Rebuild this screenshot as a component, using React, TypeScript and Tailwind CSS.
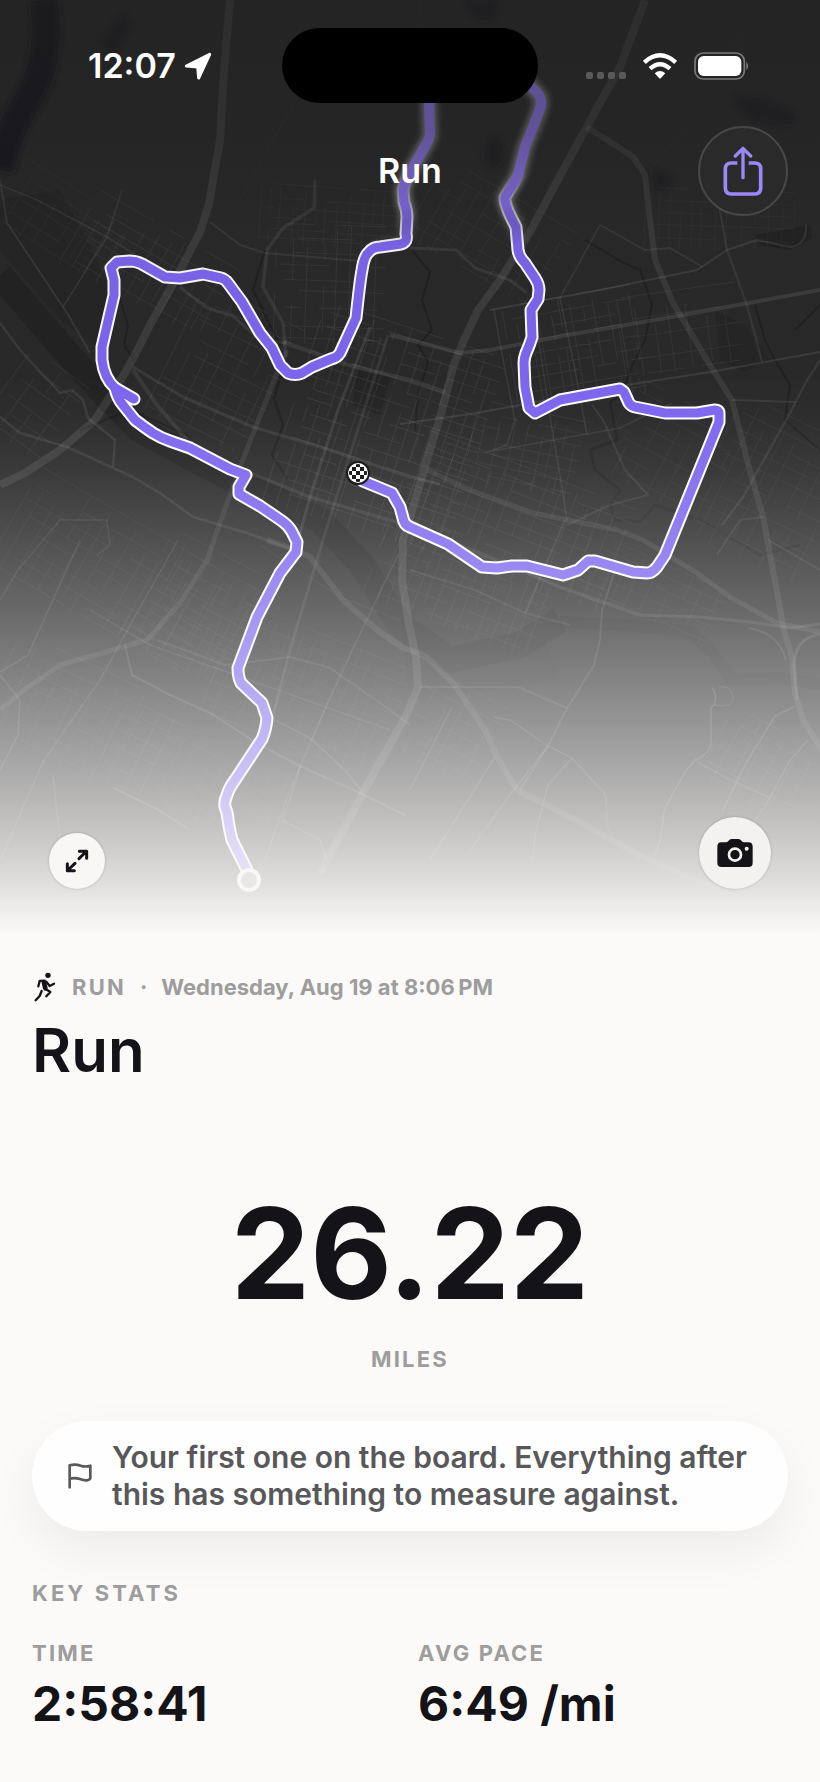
import React from "react";

type Road = { d: string; w: number; o: number };

const majorRoads: Road[] = [
  { d: "M230 0L224 70L220 140L213 180L209 204L200 232L175 280L150 325L135 355L125 373L95 420L60 450L25 473L0 485", w: 8, o: 0.09 },
  { d: "M645 0L620 67L585 130L555 185L530 232L500 280L478 310L464 340L453 367L443 407L427 460L413 507L403 540L402 580L409 625L416 657L418 687L408 712L363 793L320 873", w: 8, o: 0.09 },
  { d: "M267 540L290 548L310 557L343 600L377 630L403 648Q420 652 430 660L453 683L485 730L497 757L517 790L570 817L643 857L720 890", w: 6, o: 0.08 },
  { d: "M586 127L612 143L633 157L645 175L650 220L655 260L673 303L713 370L732 400L747 460L763 517L778 597L783 627L792 657L795 693L803 720L822 750", w: 6, o: 0.08 },
  { d: "M820 290L683 315L568 335L490 350L460 353L410 340L390 335", w: 4, o: 0.09 },
  { d: "M283 342L320 355L345 364L410 380L445 392", w: 4, o: 0.08 },
  { d: "M820 352L710 372L627 385L477 413L400 424", w: 2, o: 0.09 },
  { d: "M490 310L600 290L697 270L727 250L757 240L790 247Q807 245 806 225", w: 2, o: 0.09 },
  { d: "M427 470L470 490L533 513L617 530L643 540L697 573L730 597L777 623L820 632", w: 5, o: 0.07 },
  { d: "M820 360L806 382L790 413L743 497L722 525", w: 2.5, o: 0.07 },
  { d: "M0 710L24 690L60 665L147 640L180 603L207 560L220 523L240 467L277 373L287 350", w: 5, o: 0.07 },
  { d: "M315 180L314 208L283 228L267 250L263 287L283 323L286 357", w: 3.5, o: 0.07 },
  { d: "M180 287L207 308L233 316L260 340L287 343", w: 3, o: 0.08 },
  { d: "M0 323L20 350L60 393L72 390L83 400L88 418L115 440L113 467", w: 2.5, o: 0.08 },
  { d: "M0 417L20 433L67 447L133 477L160 493L193 517L247 533L300 552", w: 2.5, o: 0.08 },
  { d: "M0 180L7 223L67 313L90 353", w: 2, o: 0.08 },
  { d: "M0 185L37 200L107 237L147 262", w: 1.5, o: 0.08 },
  { d: "M122 190L107 237L63 307", w: 1.5, o: 0.08 },
  { d: "M133 367L183 397L253 427L320 447L410 477L440 484", w: 3, o: 0.08 },
  { d: "M133 370L157 405L187 440", w: 4, o: 0.07 },
  { d: "M250 473L310 497L400 523L480 553L560 587L640 615", w: 3.5, o: 0.07 },
  { d: "M370 327L338 410L310 497L290 570", w: 3, o: 0.09 },
  { d: "M388 335L345 470L323 540L290 650L273 715", w: 3, o: 0.07 },
  { d: "M210 222L240 245L265 253L372 262", w: 2, o: 0.07 },
  { d: "M410 248L456 250L475 268L510 280L527 293", w: 3, o: 0.07 },
  { d: "M600 225L560 298L575 370L587 435", w: 1.5, o: 0.08 },
  { d: "M494 310L505 370L515 420L507 445L487 452L620 428L640 418L672 403", w: 1.5, o: 0.08 },
  { d: "M592 405L603 420L625 470L648 495L610 505L567 525", w: 2, o: 0.07 },
  { d: "M534 310L553 435L562 487L567 520", w: 1.5, o: 0.07 },
  { d: "M718 200L727 250L747 305L762 362", w: 2, o: 0.08 },
  { d: "M732 400L765 401L795 402", w: 2, o: 0.08 },
  { d: "M600 225L645 250L670 248L703 267", w: 2, o: 0.07 },
  { d: "M410 570L475 590L525 613L570 625", w: 2, o: 0.07 },
  { d: "M525 613L565 520", w: 2, o: 0.07 },
  { d: "M400 620L340 597L260 545", w: 1, o: 0.05 },
  { d: "M615 570L602 610L600 640L594 665L565 712L548 746L520 790", w: 2, o: 0.09 },
  { d: "M420 687L460 687L518 687L567 708", w: 2, o: 0.08 },
  { d: "M494 717L510 720L548 746L572 758L548 785L535 835L533 860", w: 1.5, o: 0.1 },
  { d: "M572 758L592 780L606 795L607 825L612 835", w: 1.5, o: 0.1 },
  { d: "M712 688Q718 696 714 705Q710 707 711 715L711 745Q708 755 695 760L685 772L665 808L660 840L655 855", w: 1.5, o: 0.12 },
  { d: "M714 705Q735 708 733 697Q730 684 719 687", w: 1, o: 0.1 },
  { d: "M640 615L700 617L750 622L790 628L820 624", w: 3, o: 0.08 },
  { d: "M748 628Q778 632 786 660", w: 2, o: 0.09 },
  { d: "M820 634Q795 638 794 665L797 700", w: 3, o: 0.09 },
  { d: "M794 707L775 716L745 765L722 812", w: 2, o: 0.1 },
  { d: "M808 740L790 760L770 798L752 825", w: 1.5, o: 0.1 },
  { d: "M697 762L735 782L770 798", w: 1.5, o: 0.1 },
  { d: "M763 517L740 520L717 555M768 540L820 570", w: 2, o: 0.07 },
  { d: "M178 540L133 620L100 680L44 760L0 860", w: 1.5, o: 0.09 },
  { d: "M80 540L28 655L0 672", w: 1.5, o: 0.09 },
  { d: "M125 645L132 675L170 695L210 713L260 745L300 766L360 793L405 815", w: 2, o: 0.1 },
  { d: "M90 610L150 645L250 680L390 730", w: 1.5, o: 0.08 },
  { d: "M157 640L225 665L290 657L330 668L390 710L410 725", w: 2, o: 0.08 },
  { d: "M398 555L357 640L320 720L290 790L265 860", w: 1.5, o: 0.09 },
  { d: "M275 720L310 738L345 770L363 793", w: 1.5, o: 0.1 },
  { d: "M300 767L290 800L282 820L320 840L327 860", w: 1.5, o: 0.1 },
  { d: "M0 675L20 700L18 735L0 770M53 775L60 840", w: 1.5, o: 0.1 },
  { d: "M113 788L155 808L190 830", w: 2, o: 0.1 },
  { d: "M452 707L410 790M470 850L510 795L548 746M495 757L430 860", w: 1.5, o: 0.1 },
  { d: "M0 600L18 570L60 520L107 520L110 545L97 555", w: 1.5, o: 0.07 },
  { d: "M420 0L425 60L418 130L395 200M760 0L700 110L650 170M325 50L270 145L240 200", w: 1.5, o: 0.02 },
];

const waterways = [
  { d: "M0 275L60 345L105 395L140 430L230 478L320 520L362 565L400 625L450 660L520 645L560 620", w: 26, o: 0.17 },
  { d: "M560 622L640 626L690 632L712 652L732 680L780 678L820 684", w: 12, o: 0.12 },
  { d: "M412 250L430 272L422 300L432 330L418 345L428 362L418 395L415 430", w: 2, o: 0.22 },
  { d: "M265 250L253 290L280 345M282 372L274 398L283 425L272 455L288 480", w: 2.5, o: 0.2 },
  { d: "M120 300L128 325L124 345L134 360M80 430L130 410L190 436", w: 2, o: 0.2 },
  { d: "M585 240L622 262L640 270L652 305L645 340L630 370L622 395L610 402", w: 2, o: 0.22 },
  { d: "M755 305L765 340L775 360L790 385L785 420L820 450M795 330L820 305", w: 2, o: 0.2 },
  { d: "M610 402L617 440L590 450L595 470L620 490L610 505L615 520L640 522L655 505L700 520L735 540L760 555L800 545", w: 3, o: 0.15 },
];

const patches: { cx: number; cy: number; w: number; h: number; a: number; s: number; o: number }[] = [
  { cx: 385, cy: 430, w: 190, h: 210, a: 18, s: 12, o: 0.075 },
  { cx: 510, cy: 520, w: 230, h: 110, a: 21, s: 13, o: 0.06 },
  { cx: 460, cy: 590, w: 180, h: 80, a: 21, s: 12, o: 0.05 },
  { cx: 575, cy: 350, w: 130, h: 110, a: -10, s: 11, o: 0.065 },
  { cx: 680, cy: 330, w: 120, h: 80, a: -8, s: 17, o: 0.055 },
  { cx: 525, cy: 450, w: 110, h: 80, a: 12, s: 13, o: 0.055 },
  { cx: 225, cy: 370, w: 110, h: 140, a: 26, s: 15, o: 0.06 },
  { cx: 150, cy: 265, w: 160, h: 80, a: 30, s: 14, o: 0.055 },
  { cx: 330, cy: 285, w: 110, h: 120, a: 2, s: 14, o: 0.06 },
  { cx: 335, cy: 218, w: 150, h: 60, a: 4, s: 11, o: 0.04 },
  { cx: 490, cy: 235, w: 150, h: 90, a: 30, s: 14, o: 0.045 },
  { cx: 60, cy: 220, w: 130, h: 70, a: 32, s: 16, o: 0.035 },
  { cx: 720, cy: 220, w: 150, h: 60, a: 2, s: 12, o: 0.035 },
  { cx: 35, cy: 405, w: 70, h: 90, a: 36, s: 15, o: 0.055 },
  { cx: 110, cy: 570, w: 220, h: 110, a: 30, s: 15, o: 0.045 },
  { cx: 200, cy: 610, w: 120, h: 120, a: 28, s: 13, o: 0.045 },
  { cx: 300, cy: 690, w: 200, h: 120, a: 22, s: 14, o: 0.045 },
  { cx: 80, cy: 720, w: 180, h: 110, a: 25, s: 17, o: 0.045 },
  { cx: 190, cy: 780, w: 180, h: 90, a: 27, s: 16, o: 0.045 },
  { cx: 450, cy: 730, w: 90, h: 90, a: 27, s: 15, o: 0.05 },
  { cx: 770, cy: 490, w: 130, h: 150, a: 26, s: 16, o: 0.045 },
  { cx: 670, cy: 450, w: 120, h: 100, a: 28, s: 16, o: 0.045 },
  { cx: 760, cy: 765, w: 100, h: 80, a: 28, s: 14, o: 0.06 },
  { cx: 650, cy: 590, w: 150, h: 60, a: 24, s: 15, o: 0.045 },
];

/* Street blocks: broken parallel lines in both directions of a tilted patch. */
function streets(w: number, h: number, s: number, seed: number) {
  let state = seed * 7919 + 13;
  const rnd = () => {
    state = (state * 1103515245 + 12345) % 2147483648;
    return state / 2147483648;
  };
  const out: string[] = [];
  const run = (len: number, across: number, horizontal: boolean) => {
    for (let p = -across / 2; p <= across / 2; p += s * (0.75 + rnd() * 0.6)) {
      let t = -len / 2 + rnd() * s * 2;
      while (t < len / 2) {
        const e = Math.min(len / 2, t + s * (1 + rnd() * 5));
        const a = t.toFixed(1);
        const b = e.toFixed(1);
        const q = p.toFixed(1);
        out.push(horizontal ? `M${a} ${q}L${b} ${q}` : `M${q} ${a}L${q} ${b}`);
        t = e + s * (rnd() < 0.5 ? 0 : 1 + rnd());
      }
    }
  };
  run(w, h, true);
  run(h, w, false);
  return out.join("");
}

const routeA =
  "M429 60L429 103L430 135Q428 142 424 148L413 167Q405 180 403 190L404 202Q407 210 407 217L406 234Q408 242 401 244L380 247Q373 247 369 252Q364 256 362 270Q360 280 356 318L340 353Q337 358 331 359L312 367L302 373Q295 376 288 373L280 365L272 348L260 333L242 302L228 283Q225 279 221 278L203 274L180 278L165 277L142 264Q136 261 130 261L117 262L111 268L114 280L114 295L102 347L102 360Q104 378 115 388L134 399";
const routeB =
  "M115 388Q117 398 123 405L135 420Q144 427 153 433Q161 438 170 441L190 448L230 469L246 475L239 487L239 494L260 506L282 521Q289 526 292 532L297 542L296 552L280 573L257 617L238 668Q238 677 241 683L262 703L267 718Q266 730 262 739L235 780Q229 788 227 795Q224 801 225 807Q228 814 228 820Q230 832 232 840L247 870";
const routeC =
  "M515 70L532 88Q542 95 541 105Q540 110 525 147L518 175Q516 180 505 197Q504 205 516 227L518 250Q519 257 525 263L535 278Q539 284 539 290L538 299L531 310L532 337Q530 344 526 353Q524 358 524 363L525 387L529 408L535 413L560 400L620 389L624 392L629 403Q631 406 635 407L665 413L697 413L715 410Q719 410 719 413L719 422L665 555L657 567Q652 573 647 573L633 572L595 561L588 561L578 570L563 575L527 566L512 566L497 568L482 567L448 544L410 527Q404 525 403 518L400 507L392 493L363 481L358 473";

function Route() {
  return (
    <g fill="none" strokeLinecap="round" strokeLinejoin="round">
      <g stroke="#ffffff" strokeWidth="13">
        <path d={routeA} />
        <path d={routeB} />
        <path d={routeC} />
      </g>
      <g stroke="#7e66ef" strokeWidth="9">
        <path d={routeA} />
        <path d={routeB} />
        <path d={routeC} />
      </g>
    </g>
  );
}

function RouteMap() {
  const checks: React.ReactNode[] = [];
  for (let r = 0; r < 5; r++)
    for (let c = 0; c < 5; c++)
      if ((r + c) % 2 === 0)
        checks.push(<rect key={`${r}-${c}`} x={348 + c * 4} y={463 + r * 4} width="4" height="4" />);
  return (
    <svg
      className="absolute inset-0 h-full w-full"
      viewBox="0 0 820 940"
      preserveAspectRatio="xMidYMin slice"
      role="img"
      aria-label="Map of the run"
    >
      <defs>
        <linearGradient id="page" x1="0" y1="0" x2="0" y2="940" gradientUnits="userSpaceOnUse">
          <stop offset="0.4" stopColor="#f8f8fa" stopOpacity="0" />
          <stop offset="0.44" stopColor="#f8f8fa" stopOpacity="0.02" />
          <stop offset="0.5" stopColor="#f8f8fa" stopOpacity="0.08" />
          <stop offset="0.575" stopColor="#f8f8fa" stopOpacity="0.19" />
          <stop offset="0.65" stopColor="#f8f8fa" stopOpacity="0.31" />
          <stop offset="0.724" stopColor="#f8f8fa" stopOpacity="0.44" />
          <stop offset="0.787" stopColor="#f8f8fa" stopOpacity="0.56" />
          <stop offset="0.851" stopColor="#fbfaf8" stopOpacity="0.68" />
          <stop offset="0.904" stopColor="#fbfaf8" stopOpacity="0.79" />
          <stop offset="0.936" stopColor="#fbfaf8" stopOpacity="0.86" />
          <stop offset="0.968" stopColor="#fbfaf8" stopOpacity="0.94" />
          <stop offset="0.995" stopColor="#fbfaf8" />
        </linearGradient>
        <linearGradient id="bar" x1="0" y1="0" x2="0" y2="420" gradientUnits="userSpaceOnUse">
          <stop offset="0" stopColor="#1f1f1f" stopOpacity="0.5" />
          <stop offset="0.32" stopColor="#1f1f1f" stopOpacity="0.38" />
          <stop offset="0.56" stopColor="#1f1f1f" stopOpacity="0.06" />
          <stop offset="1" stopColor="#1f1f1f" stopOpacity="0" />
        </linearGradient>
        <linearGradient id="fadeIn" x1="0" y1="170" x2="0" y2="245" gradientUnits="userSpaceOnUse">
          <stop offset="0" stopColor="#000" />
          <stop offset="1" stopColor="#fff" />
        </linearGradient>
        <linearGradient id="fadeOut" x1="0" y1="205" x2="0" y2="245" gradientUnits="userSpaceOnUse">
          <stop offset="0" stopColor="#fff" />
          <stop offset="1" stopColor="#000" />
        </linearGradient>
        <mask id="sharp" maskUnits="userSpaceOnUse" x="0" y="0" width="820" height="940">
          <rect width="820" height="940" fill="url(#fadeIn)" />
        </mask>
        <mask id="hazy" maskUnits="userSpaceOnUse" x="0" y="0" width="820" height="940">
          <rect width="820" height="940" fill="url(#fadeOut)" />
        </mask>
        <filter id="soft" filterUnits="userSpaceOnUse" x="0" y="0" width="820" height="940">
          <feGaussianBlur stdDeviation="3" />
        </filter>
        <clipPath id="finish">
          <circle cx="358" cy="473" r="9" />
        </clipPath>
      </defs>

      <rect width="820" height="940" fill="#292929" />
      <path d="M44 0Q52 60 28 100Q8 130 0 170" fill="none" stroke="#18191f" strokeWidth="28" filter="url(#soft)" />
      <g fill="#16171c" opacity="0.5" filter="url(#soft)">
        <path d="M732 96L760 98L795 112L796 124L770 126L745 115Z" />
        <path d="M652 168L674 178L664 192L654 190Z" />
        <path d="M486 140L500 135L504 160L492 170L484 158Z" />
        <path d="M462 0L500 0L494 22L474 18Z" />
        <path d="M100 40L126 10L132 26L112 60Z" />
      </g>
      <path d="M0 200L60 190L90 245L110 290L100 350L60 320L0 250Z" fill="#222" opacity="0.5" />
      <path d="M715 310L745 325L770 360L745 372L720 360Z" fill="#202020" opacity="0.35" />
      <path d="M357 370L390 378L380 415L353 405Z" fill="#202020" opacity="0.6" />
      <path d="M755 235L810 225L812 238L790 250L760 245Z" fill="#1e1e1e" opacity="0.6" />
      <path d="M400 620L545 640L560 680L410 700Z" fill="#222" opacity="0.3" />
      <g fill="none" stroke="#000000" strokeLinejoin="round">
        {waterways.map((r) => (
          <path key={r.d} d={r.d} strokeWidth={r.w} opacity={r.o} />
        ))}
      </g>
      <g fill="none" stroke="#ffffff" strokeWidth="1">
        {patches.map((p, i) => (
          <path
            key={i}
            d={streets(p.w, p.h, p.s, i + 1)}
            transform={`translate(${p.cx} ${p.cy}) rotate(${p.a})`}
            opacity={p.o}
          />
        ))}
      </g>
      <g fill="none" stroke="#ffffff" strokeLinejoin="round">
        {majorRoads.map((r) => (
          <path key={r.d} d={r.d} strokeWidth={r.w} opacity={r.o} />
        ))}
      </g>

      <g mask="url(#hazy)">
        <g filter="url(#soft)" opacity="0.6">
          <g fill="none" stroke="#bdbdbd" strokeWidth="15">
            <path d={routeA} />
            <path d={routeC} />
          </g>
        </g>
        <g fill="none" stroke="#8a73e6" strokeWidth="10" strokeLinejoin="round">
          <path d={routeA} />
          <path d={routeC} />
        </g>
      </g>
      <g mask="url(#sharp)">
        <Route />
      </g>
      <rect width="820" height="420" fill="url(#bar)" />
      <rect width="820" height="940" fill="url(#page)" />

      <circle cx="249" cy="880" r="10" fill="#e8e8e8" stroke="#f9f8f6" strokeWidth="4" />
      <circle cx="358" cy="473" r="12" fill="#1b1b1b" />
      <circle cx="358" cy="473" r="10" fill="#ffffff" />
      <g clipPath="url(#finish)" fill="#1b1b1b">{checks}</g>
    </svg>
  );
}

function LocationIcon() {
  return (
    <svg className="h-7 w-7" viewBox="0 0 84 84" fill="#fff" stroke="#fff" strokeWidth="9" strokeLinejoin="round" aria-hidden="true">
      <path d="M77 7L44 78L41 45L7 42Z" />
    </svg>
  );
}

function WifiIcon() {
  return (
    <svg className="h-7 w-9" viewBox="0 0 108 84" aria-hidden="true">
      <g fill="none" stroke="#fff" strokeWidth="13">
        <path d="M7 31Q54 -11 101 31" />
        <path d="M24 50Q54 23 84 50" />
      </g>
      <path d="M38 64Q54 50 70 64L57 78Q54 81 51 78Z" fill="#fff" />
    </svg>
  );
}

function BatteryIcon() {
  return (
    <svg className="h-7 w-14" viewBox="0 0 168 84" aria-hidden="true">
      <rect x="3" y="3" width="148" height="78" rx="25" fill="none" stroke="#7b7b7b" strokeWidth="5" />
      <rect x="12" y="12" width="130" height="60" rx="17" fill="#fff" />
      <path d="M157 29Q168 42 157 55Z" fill="#7b7b7b" />
    </svg>
  );
}

function ShareIcon() {
  return (
    <svg className="h-[50px] w-10" viewBox="0 0 120 150" fill="none" stroke="#9b87f7" strokeLinecap="round" strokeLinejoin="round" aria-hidden="true">
      <path strokeWidth="11" strokeLinecap="butt" d="M43 51H25Q7 51 7 69V126Q7 144 25 144H95Q113 144 113 126V69Q113 51 95 51H77" />
      <path strokeWidth="10" d="M60 95V7M37 30L60 7L83 30" />
    </svg>
  );
}

function ExpandIcon() {
  return (
    <svg className="h-6 w-6" viewBox="0 0 72 72" fill="none" stroke="#141418" strokeWidth="9" strokeLinecap="round" strokeLinejoin="round" aria-hidden="true">
      <path d="M42 29L62 9M43 7H65V28M30 43L9 63M7 44V65H28" />
    </svg>
  );
}

function CameraIcon() {
  return (
    <svg className="h-7 w-9" viewBox="0 0 108 84" aria-hidden="true">
      <path
        fill="#141418"
        d="M13 10H27Q31 10 34 6Q38 0 44 0H64Q70 0 74 6Q77 10 81 10H94Q107 10 107 23V71Q107 84 94 84H14Q1 84 1 71V23Q1 10 13 10Z"
      />
      <circle cx="54" cy="47" r="18" fill="none" stroke="#f3f2f0" strokeWidth="8" />
      <circle cx="89" cy="29" r="6" fill="#f3f2f0" />
    </svg>
  );
}

function RunnerIcon() {
  return (
    <svg className="h-[30px] w-[22px]" viewBox="0 0 66 90" fill="none" stroke="#141418" strokeWidth="7" strokeLinecap="round" strokeLinejoin="round" aria-hidden="true">
      <circle cx="42" cy="10" r="8" fill="#141418" stroke="none" />
      <path strokeWidth="14" d="M30 32L34 49" />
      <path d="M32 26L17 27L13 43M37 29L47 42L60 35M34 50L49 60L37 73M23 57L17 72L5 85" />
    </svg>
  );
}

function FlagIcon() {
  return (
    <svg className="h-[26px] w-6 shrink-0" viewBox="0 0 72 78" fill="none" stroke="#58585a" strokeWidth="8" strokeLinecap="round" strokeLinejoin="round" aria-hidden="true">
      <path d="M5 73V7Q22 2 38 8Q52 13 67 8V45Q66 51 56 52Q45 52 36 48Q20 43 5 47" />
    </svg>
  );
}

function StatusBar() {
  return (
    <div className="grid grid-cols-[1fr_256px_1fr] items-center">
      <div className="flex items-center gap-2 pl-[88px]">
        <span className="text-[34px] leading-10 font-semibold">12:07</span>
        <LocationIcon />
      </div>
      <div className="h-[75px] rounded-full bg-black" />
      <div className="flex items-center justify-end gap-4 pr-[70px]">
        <div className="flex gap-1 pt-5">
          <i className="size-[7px] rounded-xs bg-[#595959]" />
          <i className="size-[7px] rounded-xs bg-[#595959]" />
          <i className="size-[7px] rounded-xs bg-[#595959]" />
          <i className="size-[7px] rounded-xs bg-[#595959]" />
        </div>
        <WifiIcon />
        <BatteryIcon />
      </div>
    </div>
  );
}

function Stat({ label, value }: { label: string; value: string }) {
  return (
    <div>
      <dt className="text-[22px] leading-7 font-bold tracking-widest text-[#9d9d9e]">{label}</dt>
      <dd className="mt-[7px] text-[48px] leading-[60px] font-bold text-[#141418]">{value}</dd>
    </div>
  );
}

export default function App() {
  return (
    <div className="min-h-screen overflow-hidden bg-[#fbfaf8] font-['Inter','Liberation_Sans',sans-serif] text-[#141418]">
      <header className="relative flex min-h-[940px] flex-col justify-between pt-7 pb-[51px] text-white">
        <RouteMap />
        <div className="relative">
          <StatusBar />
          <nav className="mt-[23px] grid grid-cols-[1fr_auto_1fr] items-center px-8">
            <span />
            <span className="text-[34px] leading-10 font-semibold">Run</span>
            <button
              type="button"
              aria-label="Share"
              className="flex size-[90px] items-center justify-center justify-self-end rounded-full border-2 border-[#484848] bg-[#2a2a2a]"
            >
              <ShareIcon />
            </button>
          </nav>
        </div>
        <div className="relative flex items-end justify-between px-[49px]">
          <button
            type="button"
            aria-label="Expand map"
            className="flex size-14 items-center justify-center rounded-full bg-[#f8f7f5] shadow-[0_0_3px_rgba(0,0,0,0.2)]"
          >
            <ExpandIcon />
          </button>
          <button
            type="button"
            aria-label="Add photo"
            className="flex size-[72px] items-center justify-center rounded-full bg-[#f3f2f0] shadow-[0_0_3px_rgba(0,0,0,0.2)]"
          >
            <CameraIcon />
          </button>
        </div>
      </header>

      <main className="px-8 pt-8 pb-8">
        <div className="flex items-center text-[22px] leading-[30px] font-bold text-[#9d9d9e]">
          <span className="pl-0.5">
            <RunnerIcon />
          </span>
          <span className="ml-4 tracking-widest">RUN</span>
          <span className="mx-[14px]">·</span>
          <span>Wednesday, Aug 19 at 8:06{"\u202f"}PM</span>
        </div>
        <h1 className="mt-3 text-[60px] leading-[72px] font-semibold">Run</h1>

        <div className="mt-[92px] flex flex-col items-center">
          <p className="text-[126px] leading-[150px] font-bold">26.22</p>
          <p className="mt-[17px] text-[22px] leading-7 font-bold tracking-widest text-[#9d9d9e]">MILES</p>
        </div>

        <div className="mt-12 flex items-center gap-5 rounded-full bg-[#fefefe] px-9 py-[18px] shadow-[0_20px_50px_rgba(0,0,0,0.06)]">
          <FlagIcon />
          <p className="text-[30px] leading-[37px] font-semibold text-[#58585a]">
            Your first one on the board. Everything after this has something to measure against.
          </p>
        </div>

        <h2 className="mt-12 text-[22px] leading-7 font-bold tracking-[0.14em] text-[#9d9d9e]">KEY STATS</h2>
        <dl className="mt-8 grid grid-cols-2 gap-4">
          <Stat label="TIME" value="2:58:41" />
          <Stat label="AVG PACE" value="6:49 /mi" />
        </dl>
      </main>
    </div>
  );
}
